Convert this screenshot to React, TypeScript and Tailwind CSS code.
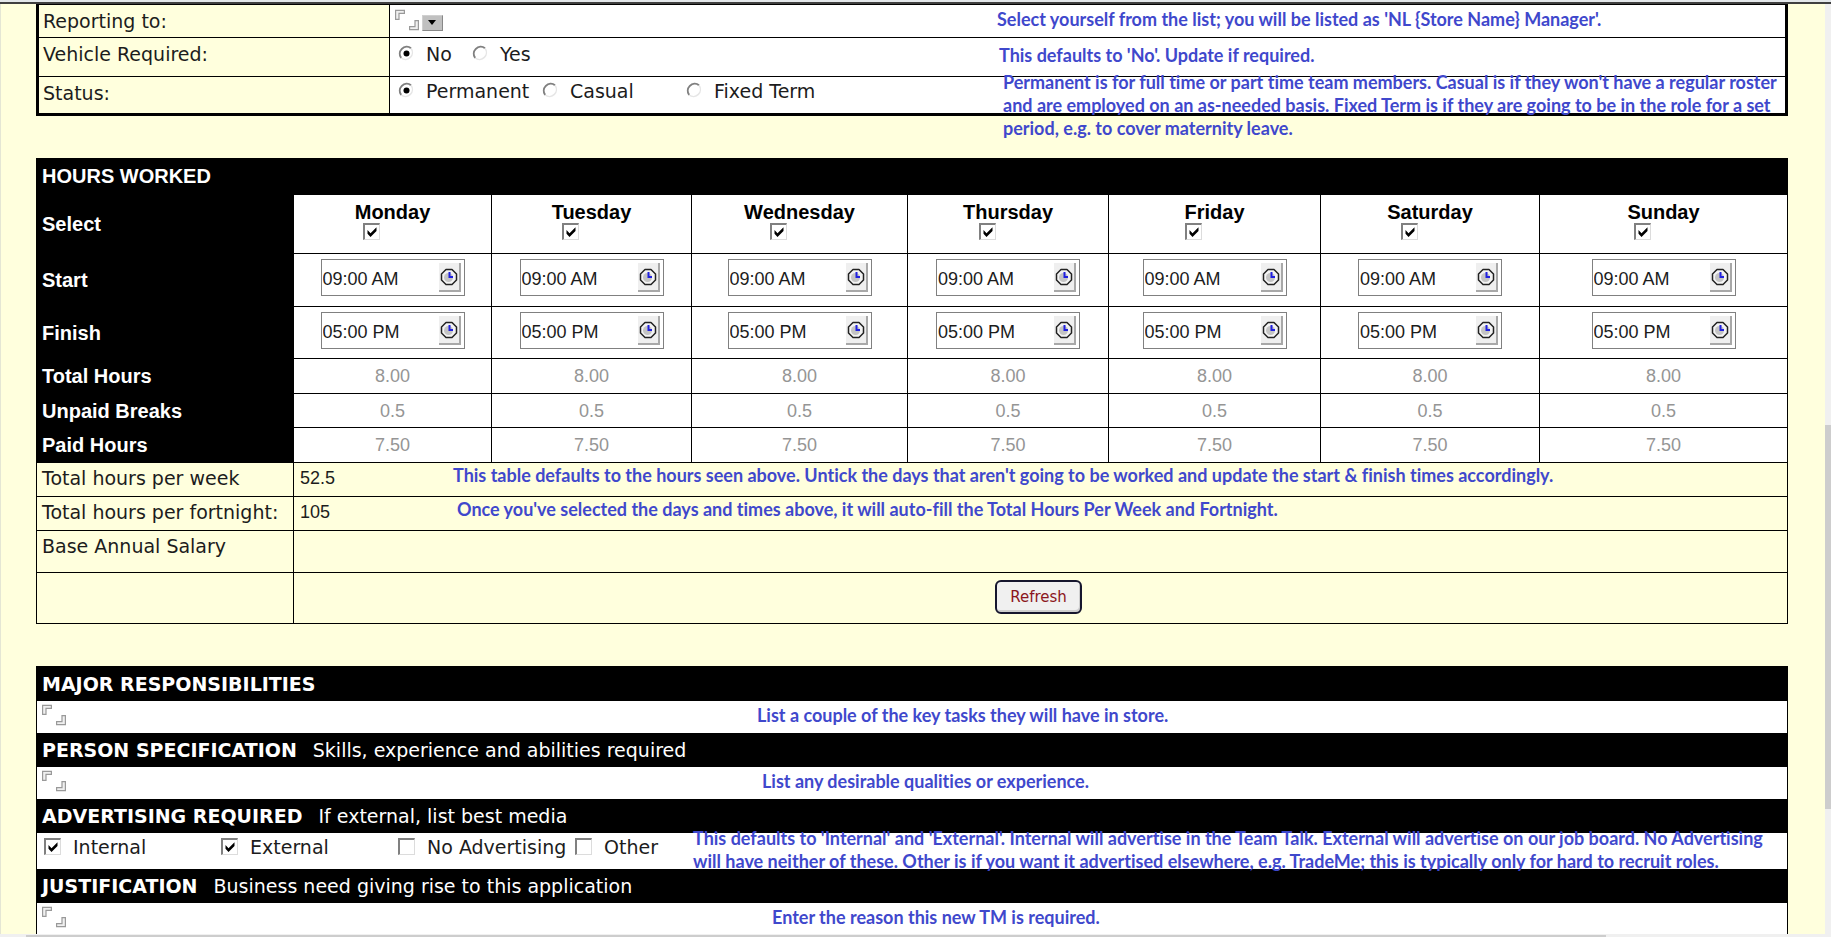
import type { ReactNode } from 'react';

const days = ['Monday', 'Tuesday', 'Wednesday', 'Thursday', 'Friday', 'Saturday', 'Sunday'];

const totals = [
    { label: 'Total Hours', value: '8.00', height: 'h-[35px]' },
    { label: 'Unpaid Breaks', value: '0.5', height: 'h-[34px]' },
    { label: 'Paid Hours', value: '7.50', height: 'h-[35px]' },
];

const noteText = "font-['Lato',Calibri,sans-serif] text-[18px] leading-[23px] font-bold text-[#3f48cc] [font-variant-ligatures:none]";
const arial = "font-['Liberation_Sans',Arial,sans-serif]";

function Note({ className = '', children }: { className?: string; children: ReactNode }) {
    return <p className={`${noteText} ${className}`}>{children}</p>;
}

// Notes-style field: a small box held between two corner brackets
function BracketField({ label }: { label: string }) {
    return (
        <span className="relative block w-[24px] h-[22px] shrink-0">
            <input aria-label={label} className="w-full h-full px-1 bg-transparent outline-none" />
            <svg viewBox="0 0 24 22" className="absolute inset-0 w-full h-full pointer-events-none" fill="#f0f0f0" stroke="#999" strokeWidth="1.2">
                <path d="M.6 10.4V1.4h8.8v3H4v6z" />
                <path d="M23.4 11.6v9h-8.8v-3H20v-6z" />
            </svg>
        </span>
    );
}

function Tick({ checked = false, label }: { checked?: boolean; label?: string }) {
    return (
        <span className="relative block w-[17px] h-[17px] shrink-0">
            <input
                type="checkbox"
                defaultChecked={checked}
                aria-label={label}
                className="peer block appearance-none w-full h-full bg-white border-t-2 border-l-2 border-r border-b border-t-[#808080] border-l-[#808080] border-r-[#dcdcdc] border-b-[#dcdcdc]"
            />
            <svg viewBox="0 0 17 17" className="hidden peer-checked:block absolute inset-0 w-full h-full pointer-events-none">
                <path d="M4.5 7v3.8L7.5 14l6-6V4.2l-6 6z" fill="#000" />
            </svg>
        </span>
    );
}

function Radio({ name, checked = false }: { name: string; checked?: boolean }) {
    return (
        <span className="relative block w-4 h-4 shrink-0">
            <input type="radio" name={name} defaultChecked={checked} className="peer block appearance-none w-full h-full rounded-full" />
            <svg viewBox="0 0 16 16" className="absolute inset-0 w-full h-full pointer-events-none" fill="none">
                <path d="M3.2 13A7 7 0 0 1 13 3.2" stroke="#808080" strokeWidth="2" />
                <path d="M13 3.2A7 7 0 0 1 3.2 13" stroke="#e6e6e6" strokeWidth="1.5" />
            </svg>
            <svg viewBox="0 0 16 16" className="hidden peer-checked:block absolute inset-0 w-full h-full pointer-events-none">
                <circle cx="8.5" cy="8.5" r="3" fill="#000" />
            </svg>
        </span>
    );
}

function RadioOption({ name, text, checked, className = '' }: { name: string; text: string; checked?: boolean; className?: string }) {
    return (
        <label className={`flex items-start gap-3 whitespace-nowrap ${className}`}>
            <Radio name={name} checked={checked} />
            <span className="-mt-[3px]">{text}</span>
        </label>
    );
}

function FormRow({ label, className, children }: { label: string; className: string; children: ReactNode }) {
    return (
        <div className={`flex ${className}`}>
            <div className="w-[350px] shrink-0 pl-1 pt-1">{label}</div>
            <div className="relative flex-1 flex min-w-0 border-l border-black bg-white">{children}</div>
        </div>
    );
}

function ClockIcon() {
    return (
        <svg viewBox="0 0 18 18" className="w-[18px] h-[18px]" fill="none">
            <path d="M6 1.5h6L16.5 6v6L12 16.5H6L1.5 12V6z" fill="#f4f4f4" stroke="#222" strokeWidth="1.5" strokeLinejoin="round" />
            <circle cx="8.5" cy="9.5" r="4.5" fill="#c4c4c4" />
            <path d="M9.5 4v5H13" stroke="#2020e0" strokeWidth="2" />
        </svg>
    );
}

function TimeField({ label, value }: { label: string; value: string }) {
    return (
        <div className="mx-auto flex w-[144px] h-[37px] border border-[#808080] bg-white pr-[3px] py-[3px]">
            <input aria-label={label} defaultValue={value} className={`${arial} flex-1 min-w-0 pl-px pt-0.5 text-[18px] outline-none`} />
            <button type="button" aria-label={`Pick ${label}`} className="flex w-[22px] items-center justify-center bg-[#efefef] border-r-2 border-b-2 border-[#a8a8a8]">
                <ClockIcon />
            </button>
        </div>
    );
}

function SectionHeader({ title, hint }: { title: string; hint?: string }) {
    return (
        <div className="flex h-[34px] items-center gap-4 bg-black pl-[5px] text-white whitespace-nowrap">
            <h2 className="font-bold">{title}</h2>
            {hint && <span>{hint}</span>}
        </div>
    );
}

function HoursTable() {
    const head = `${arial} bg-black pl-[5px] text-left text-[20px] font-bold text-white`;
    const cell = 'border border-black';
    const label = 'border border-black pl-[5px] pt-[3px] text-left font-normal align-top';
    return (
        <table className="mt-[42px] w-full table-fixed border-collapse border border-black">
            <colgroup>
                <col className="w-[257px]" />
                <col className="w-[198px]" />
                <col className="w-[200px]" />
                <col className="w-[216px]" />
                <col className="w-[201px]" />
                <col className="w-[212px]" />
                <col className="w-[219px]" />
                <col className="w-[248px]" />
            </colgroup>
            <thead>
                <tr>
                    <th colSpan={8} className={`${head} h-[36px] pb-0.5`}>HOURS WORKED</th>
                </tr>
                <tr>
                    <th scope="row" className={`${head} h-[59px]`}>Select</th>
                    {days.map((day) => (
                        <th key={day} scope="col" className={`${cell} ${arial} bg-white pt-[6px] align-top text-[20px] leading-[22px] font-bold text-black`}>
                            {day}
                            <div className="flex justify-center pr-[42px]"><Tick checked label={day} /></div>
                        </th>
                    ))}
                </tr>
            </thead>
            <tbody>
                <tr>
                    <th scope="row" className={`${head} h-[53px]`}>Start</th>
                    {days.map((day) => (
                        <td key={day} className={`${cell} bg-white pt-[5px] align-top`}><TimeField label={`${day} start`} value="09:00 AM" /></td>
                    ))}
                </tr>
                <tr>
                    <th scope="row" className={`${head} h-[52px]`}>Finish</th>
                    {days.map((day) => (
                        <td key={day} className={`${cell} bg-white pt-[5px] align-top`}><TimeField label={`${day} finish`} value="05:00 PM" /></td>
                    ))}
                </tr>
                {totals.map((row) => (
                    <tr key={row.label}>
                        <th scope="row" className={`${head} ${row.height}`}>{row.label}</th>
                        {days.map((day) => (
                            <td key={day} className={`${cell} ${arial} bg-white text-center text-[18px] text-[#959595]`}>{row.value}</td>
                        ))}
                    </tr>
                ))}
                <tr>
                    <th scope="row" className={`${label} h-[34px]`}>Total hours per week</th>
                    <td colSpan={7} className={`${cell} align-top`}>
                        <div className="flex pl-[6px] pt-px">
                            <span className={`${arial} mt-0.5 w-[153px] text-[18px]`}>52.5</span>
                            <Note>This table defaults to the hours seen above. Untick the days that aren't going to be worked and update the start &amp; finish times accordingly.</Note>
                        </div>
                    </td>
                </tr>
                <tr>
                    <th scope="row" className={`${label} h-[34px]`}>Total hours per fortnight:</th>
                    <td colSpan={7} className={`${cell} align-top`}>
                        <div className="flex pl-[6px] pt-px">
                            <span className={`${arial} mt-0.5 w-[157px] text-[18px]`}>105</span>
                            <Note>Once you've selected the days and times above, it will auto-fill the Total Hours Per Week and Fortnight.</Note>
                        </div>
                    </td>
                </tr>
                <tr>
                    <th scope="row" className={`${label} h-[42px]`}>Base Annual Salary</th>
                    <td colSpan={7} className={cell} />
                </tr>
                <tr>
                    <td className={`${cell} h-[51px]`} />
                    <td colSpan={7} className={`${cell} pr-1 pb-0.5 text-center`}>
                        <button type="button" className="h-[34px] w-[87px] rounded-md border-2 border-[#16162e] bg-[#f0f0f0] text-[15px] text-[#8b1520] shadow-[inset_-1px_-2px_0_#cfcfcf]">
                            Refresh
                        </button>
                    </td>
                </tr>
            </tbody>
        </table>
    );
}

export default function App() {
    return (
        <div className="flex h-screen flex-col overflow-hidden bg-[#ffffdd] font-['DejaVu_Sans',Verdana,sans-serif] text-[19px] leading-[24px] text-[#1c1c1c]">
            <div className="h-1 shrink-0 border-b-2 border-[#404040] bg-[#e3e7ea]" />
            <div className="flex min-h-0 flex-1">
                <main className="min-w-0 flex-1 overflow-hidden border-l border-[#e4e6d4] pl-[35px] pr-[37px]">
                    <section className="border-[3px] border-t border-black">
                        <FormRow label="Reporting to:" className="h-[33px] border-b border-black">
                            <div className="flex w-[607px] items-start pl-[5px] pt-1">
                                <BracketField label="Reporting to" />
                                <span className="relative mt-[6px] ml-[3px] block h-4 w-[21px]">
                                    <select aria-label="Choose manager" className="block h-full w-full appearance-none border border-[#d0d0d0] border-r-[#888] border-b-[#888] bg-[#c0c0c0]" />
                                    <svg viewBox="0 0 8 5" className="pointer-events-none absolute left-[6px] top-[5px] h-[5px] w-2">
                                        <path d="M0 0h8L4 5z" fill="#000" />
                                    </svg>
                                </span>
                            </div>
                            <Note className="pt-[3px]">Select yourself from the list; you will be listed as 'NL {'{Store Name}'} Manager'.</Note>
                        </FormRow>
                        <FormRow label="Vehicle Required:" className="h-[39px] border-b border-black">
                            <div className="flex w-[609px] items-start pl-2 pt-[7px]">
                                <RadioOption name="vehicle" text="No" checked className="w-[74px]" />
                                <RadioOption name="vehicle" text="Yes" />
                            </div>
                            <Note className="pt-[6px]">This defaults to 'No'. Update if required.</Note>
                        </FormRow>
                        <FormRow label="Status:" className="h-[36px]">
                            <div className="flex w-[613px] items-start pl-2 pt-[5px]">
                                <RadioOption name="status" text="Permanent" checked className="w-[144px]" />
                                <RadioOption name="status" text="Casual" className="w-[144px]" />
                                <RadioOption name="status" text="Fixed Term" />
                            </div>
                            <Note className="absolute left-[613px] right-0 -top-[6px]">
                                Permanent is for full time or part time team members. Casual is if they won't have a regular roster and are employed on an as-needed basis. Fixed Term is if they are going to be in the role for a set period, e.g. to cover maternity leave.
                            </Note>
                        </FormRow>
                    </section>

                    <HoursTable />

                    <section className="mt-[42px] border border-black bg-white">
                        <SectionHeader title="MAJOR RESPONSIBILITIES" />
                        <div className="flex h-[32px] items-start pl-[5px] pt-[3px]">
                            <BracketField label="Major responsibilities" />
                            <Note className="ml-[691px]">List a couple of the key tasks they will have in store.</Note>
                        </div>
                        <SectionHeader title="PERSON SPECIFICATION" hint="Skills, experience and abilities required" />
                        <div className="flex h-[32px] items-start pl-[5px] pt-[3px]">
                            <BracketField label="Person specification" />
                            <Note className="ml-[696px]">List any desirable qualities or experience.</Note>
                        </div>
                        <SectionHeader title="ADVERTISING REQUIRED" hint="If external, list best media" />
                        <div className="relative flex h-[36px] items-start pl-[7px] pt-[2px]">
                            {['Internal', 'External', 'No Advertising', 'Other'].map((option, i) => (
                                <label key={option} className="flex w-[177px] items-start gap-3 whitespace-nowrap">
                                    <span className="mt-[3px]"><Tick checked={i < 2} /></span>
                                    {option}
                                </label>
                            ))}
                            <Note className="absolute left-[656px] right-0 -top-[6px] z-10">
                                This defaults to 'Internal' and 'External'. Internal will advertise in the Team Talk. External will advertise on our job board. No Advertising will have neither of these. Other is if you want it advertised elsewhere, e.g. TradeMe; this is typically only for hard to recruit roles.
                            </Note>
                        </div>
                        <SectionHeader title="JUSTIFICATION" hint="Business need giving rise to this application" />
                        <div className="flex h-[32px] items-start pl-[5px] pt-[3px]">
                            <BracketField label="Justification" />
                            <Note className="ml-[706px]">Enter the reason this new TM is required.</Note>
                        </div>
                    </section>
                </main>
                <div className="flex w-[6px] flex-col bg-[#f0f0f0]">
                    <div className="h-[421px]" />
                    <div className="h-[384px] bg-[#cdcdcd]" />
                </div>
            </div>
            <div className="flex h-[3px] shrink-0 bg-[#f0f0f0] pt-px">
                <div className="ml-[26px] w-[1580px] bg-[#cdcdcd]" />
            </div>
        </div>
    );
}
